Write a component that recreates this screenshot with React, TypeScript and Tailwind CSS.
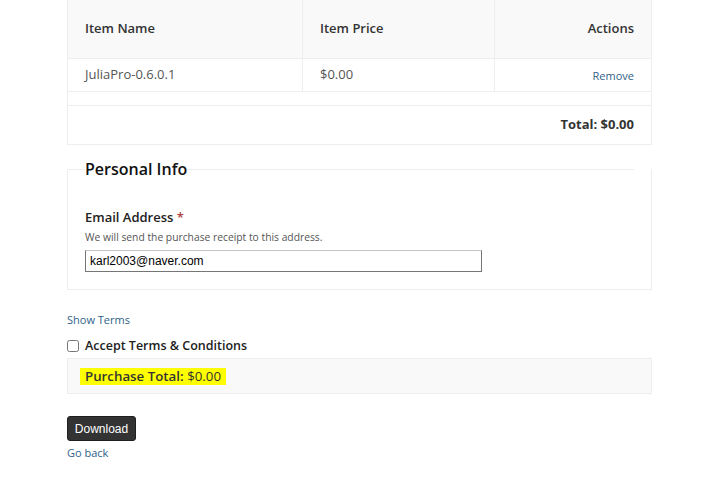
import React from "react";

export default function App() {
  const font = { fontFamily: '"Open Sans", "Noto Sans", sans-serif' };
  return (
    <div className="w-[720px] h-[492px] bg-white overflow-hidden" style={font}>
      <div className="ml-[67px] w-[585px]">
        {/* Cart table */}
        <div className="border-x border-b border-[#eeeeee]">
          <div className="grid grid-cols-[234px_192px_157px] bg-[#f9f9f9] h-[59px] border-b border-[#eeeeee] text-[13px] font-semibold text-[#333333]">
            <div className="flex items-center pl-[17px]">Item Name</div>
            <div className="flex items-center pl-[17px] border-l border-[#eeeeee]">Item Price</div>
            <div className="flex items-center justify-end pr-[17px] border-l border-[#eeeeee]">Actions</div>
          </div>
          <div className="grid grid-cols-[234px_192px_157px] h-[33px] border-b border-[#eeeeee] text-[13px] text-[#555555]">
            <div className="flex items-center pl-[17px]">JuliaPro-0.6.0.1</div>
            <div className="flex items-center pl-[17px] border-l border-[#eeeeee]">$0.00</div>
            <div className="flex items-center justify-end pr-[17px] pt-[2px] border-l border-[#eeeeee]">
              <a href="#" className="text-[11px] text-[#2f5f88]">Remove</a>
            </div>
          </div>
          <div className="h-[14px] border-b border-[#eeeeee]"></div>
          <div className="h-[38px] flex items-center justify-end pr-[17px] text-[13px] font-bold text-[#333333]">
            Total: $0.00
          </div>
        </div>

        {/* Personal Info */}
        <fieldset className="mt-[12px] border border-[#eeeeee] pl-[17px] pr-0 pt-[26px] pb-[17px]">
          <legend className="w-[566px] flex items-center p-0">
            <span className="text-[16px] leading-[24px] font-semibold text-[#111111]">Personal Info</span>
            <span className="flex-1 h-px bg-[#eeeeee] mr-[17px]"></span>
          </legend>
          <div className="text-[13px] leading-[20px] font-semibold text-[#222222]">
            Email Address <span className="text-[#a94442]">*</span>
          </div>
          <div className="mt-[2px] text-[10.3px] leading-[16px] text-[#555555]">
            We will send the purchase receipt to this address.
          </div>
          <input
            type="text"
            defaultValue="karl2003@naver.com"
            className="mt-[5px] block w-[397px] h-[22px] border border-[#767676] border-t-[#c4c4c4] px-[4px] text-[12px] text-black outline-none"
            style={{ fontFamily: '"Liberation Sans", Arial, sans-serif' }}
          />
        </fieldset>

        <div className="mt-[21px] text-[11px] leading-[18px]">
          <a href="#" className="text-[#2f5f88]">Show Terms</a>
        </div>

        <div className="mt-[7px] flex items-center h-[20px]">
          <input type="checkbox" className="w-[12px] h-[12px] m-0 accent-gray-500" />
          <span className="ml-[6px] text-[12.5px] font-semibold text-[#222222]">Accept Terms &amp; Conditions</span>
        </div>

        <div className="mt-[2px] h-[36px] border border-[#eeeeee] bg-[#f9f9f9] flex items-center pl-[12px]">
          <span className="bg-[#ffff00] px-[5px] text-[13.3px] leading-[17px] text-[#333333]">
            <span className="font-semibold">Purchase Total:</span> $0.00
          </span>
        </div>

        <button
          className="mt-[22px] block w-[69px] h-[25px] rounded-[3px] bg-[#333333] border border-[#1f1f1f] text-white text-[12px]"
          style={{ fontFamily: '"Liberation Sans", Arial, sans-serif' }}
        >
          Download
        </button>

        <div className="mt-[3px] text-[11px] leading-[18px]">
          <a href="#" className="text-[#2f5f88]">Go back</a>
        </div>
      </div>
    </div>
  );
}
